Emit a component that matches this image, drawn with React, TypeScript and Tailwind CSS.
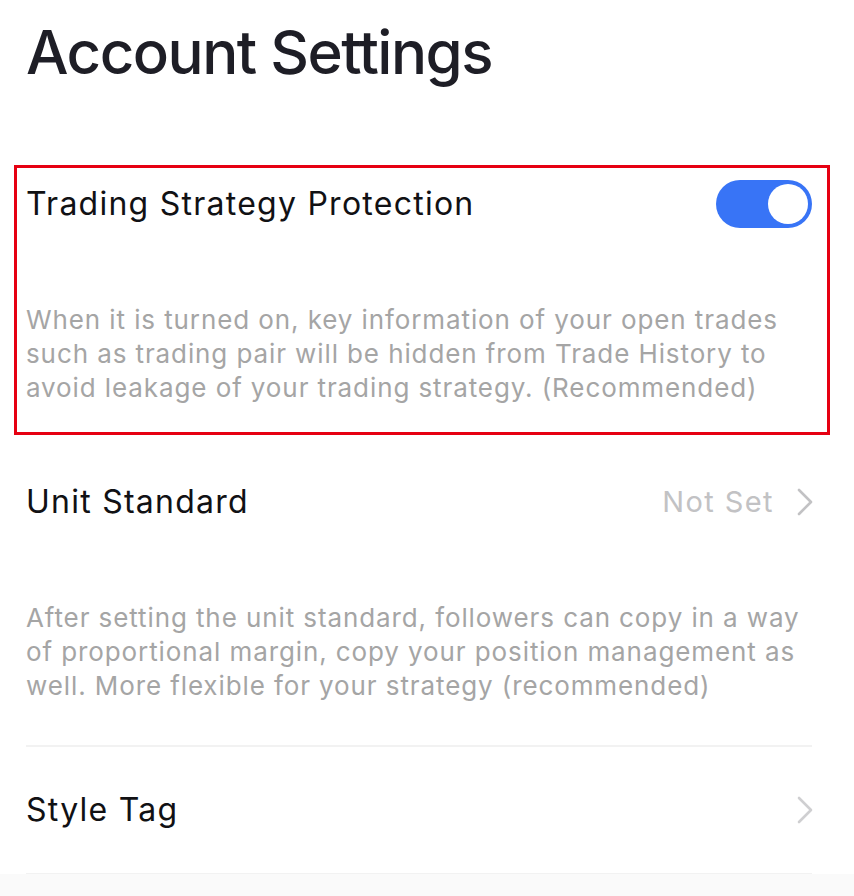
function Toggle() {
  return (
    <div className="flex h-[48px] w-[96px] items-center justify-end rounded-full bg-[#3874f6] px-[4px]">
      <div className="h-[40px] w-[40px] rounded-full bg-white" />
    </div>
  );
}

function Chevron({ className }: { className?: string }) {
  return (
    <svg width="18" height="30" viewBox="0 0 18 30" fill="none" className={className}>
      <path d="M3 3 L15 15 L3 27" stroke="currentColor" strokeWidth="2.6" strokeLinecap="round" strokeLinejoin="round" />
    </svg>
  );
}

export default function App() {
  return (
    <div className="min-h-[896px] bg-white font-['Inter',sans-serif] text-[#111114]">
      <div className="pl-[26px] pr-[42px]">
        <h1 className="pt-[18px] text-[60px] leading-[68px] font-medium tracking-[-1.5px] text-[#1e1e26]">
          Account Settings
        </h1>

        <section className="relative mt-[84px] pb-[34px]">
          <div className="pointer-events-none absolute -top-[5px] -right-[18px] bottom-[4px] -left-[12px] border-[3px] border-[#e60012]" />
          <div className="flex items-center justify-between pt-[10px]">
            <span className="text-[32px] leading-[48px] tracking-[1.25px]">Trading Strategy Protection</span>
            <Toggle />
          </div>
          <p className="mt-[75px] text-[26px] leading-[34px] tracking-[0.9px] text-[#a5a5a5]">
            When it is turned on, key information of your open trades such as trading pair will be hidden from Trade
            History to avoid leakage of your trading strategy. (Recommended)
          </p>
        </section>

        <section className="pt-[39px] pb-[42px] border-b-2 border-[#f2f2f2]">
          <div className="flex items-center justify-between">
            <span className="text-[32px] leading-[48px] tracking-[1.25px]">Unit Standard</span>
            <div className="flex items-center gap-[22px] text-[#c2c2c4]">
              <span className="text-[29px] leading-[48px] tracking-[1.4px]">Not Set</span>
              <Chevron className="-mr-[2px]" />
            </div>
          </div>
          <p className="mt-[75px] text-[26px] leading-[34px] tracking-[0.9px] text-[#a5a5a5]">
            After setting the unit standard, followers can copy in a way of proportional margin, copy your position
            management as well. More flexible for your strategy (recommended)
          </p>
        </section>

        <section className="flex h-[127px] items-center justify-between border-b border-[#f2f2f2]">
          <span className="text-[32px] leading-[48px] tracking-[1.25px]">Style Tag</span>
          <Chevron className="-mr-[2px] text-[#cfcfd1]" />
        </section>
      </div>
      <div className="h-[30px] bg-[#fafafa]" />
    </div>
  );
}
